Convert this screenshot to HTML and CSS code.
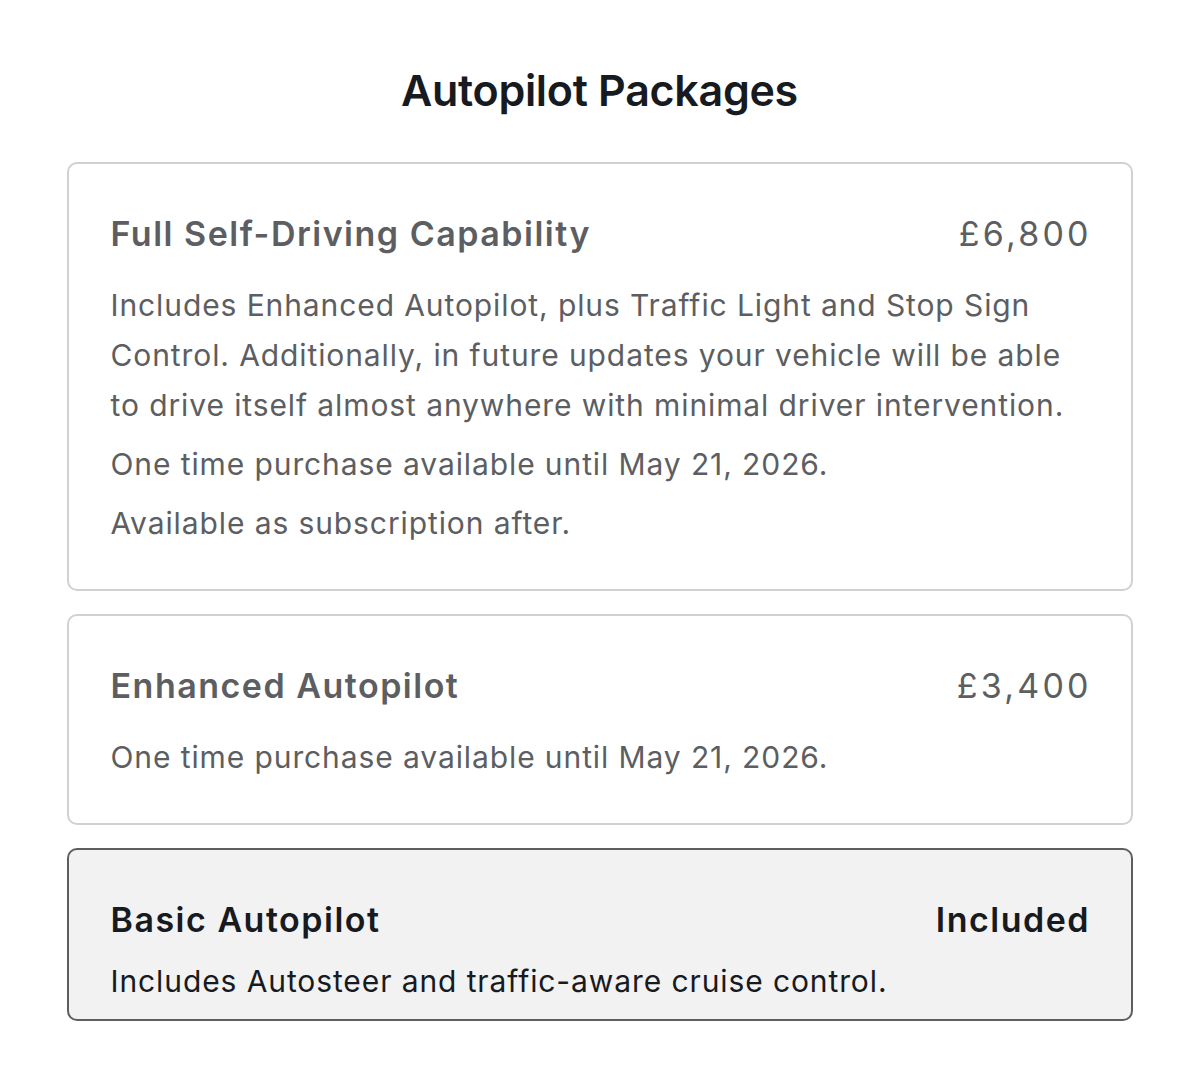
FILE: index.html
```html
<!DOCTYPE html>
<html>
	<head>
		<meta charset="utf-8">
		<title>Autopilot Packages</title>
		<link rel="stylesheet" href="styles.css">
	</head>
	<body>
		<div class="page">
			<h1 class="title">Autopilot Packages</h1>
			<div class="card">
				<div class="card_head">
					<span class="name">Full Self-Driving Capability</span>
					<span class="price">£6,800</span>
				</div>
				<p class="desc">Includes Enhanced Autopilot, plus Traffic Light and Stop Sign Control. Additionally, in future updates your vehicle will be able to drive itself almost anywhere with minimal driver intervention.</p>
				<p class="desc">One time purchase available until May 21, 2026.</p>
				<p class="desc">Available as subscription after.</p>
			</div>
			<div class="card">
				<div class="card_head">
					<span class="name">Enhanced Autopilot</span>
					<span class="price">£3,400</span>
				</div>
				<p class="desc">One time purchase available until May 21, 2026.</p>
			</div>
			<div class="card selected">
				<div class="card_head">
					<span class="name">Basic Autopilot</span>
					<span class="price">Included</span>
				</div>
				<p class="desc">Includes Autosteer and traffic-aware cruise control.</p>
			</div>
		</div>
	</body>
</html>
```

FILE: styles.css
```css
body {
	margin: 0;
	background-color: #fff;
	font-family: Inter, "Noto Sans", sans-serif;
	color: #171a20;
}

.page {
	width: 1066px;
	margin: 0 auto;
	padding-top: 64px;
	display: flex;
	flex-direction: column;
	gap: 23px;
}

.title {
	margin: 0 0 23px;
	font-size: 43px;
	line-height: 52px;
	font-weight: 600;
	text-align: center;
	letter-spacing: -0.3px;
}

.card {
	border: 2px solid #d0d1d2;
	border-radius: 10px;
	padding: 45px 42px 41px;
	color: #5c5e62;
}

.card_head {
	display: flex;
	justify-content: space-between;
	align-items: center;
	height: 48px;
	margin-bottom: 23px;
	font-size: 34px;
	font-weight: 600;
	letter-spacing: 1.5px;
}

.name {
	margin-right: -1.5px;
}

.price {
	font-weight: 400;
	letter-spacing: 3.2px;
	margin-right: -3.2px;
}

.desc {
	margin: 0;
	max-width: 965px;
	font-size: 30px;
	line-height: 50px;
	letter-spacing: 0.9px;
}

.desc + .desc {
	margin-top: 9px;
}

.selected {
	background-color: #f2f2f2;
	border-color: #5c5e62;
	color: #171a20;
	padding-bottom: 13px;
}

.selected .card_head {
	margin-bottom: 13px;
}

.selected .price {
	font-weight: 600;
	letter-spacing: 1.5px;
	margin-right: -1.5px;
}
```
